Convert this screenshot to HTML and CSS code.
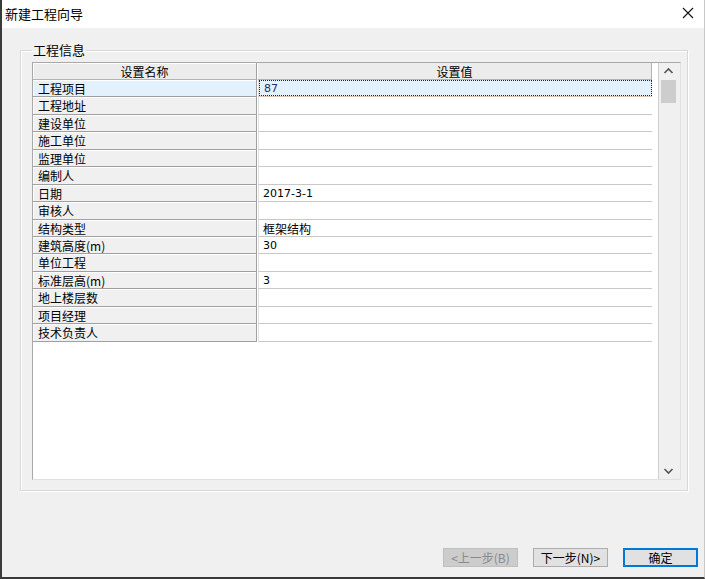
FILE: index.html
```html
<!DOCTYPE html>
<html lang="zh-CN">

<head>
    <meta charset="UTF-8">
    <meta name="viewport" content="width=device-width, initial-scale=1.0">
    <link rel="stylesheet" href="styles.css">
</head>

<body>
    <div class="window">
        <div class="titlebar">
            <span class="title">新建工程向导</span>
            <svg class="close" width="12" height="12" viewBox="0 0 12 12">
                <path d="M1 1 L11 11 M11 1 L1 11" stroke="#111" stroke-width="1.1" fill="none" />
            </svg>
        </div>

        <div class="body">
            <fieldset class="group">
                <legend>工程信息</legend>
                <div class="grid">
                    <div class="sheet">
                        <div class="row head">
                            <div class="name">设置名称</div>
                            <div class="value">设置值</div>
                        </div>
                        <div class="row selected">
                            <div class="name">工程项目</div>
                            <div class="value"><span class="focus">87</span></div>
                        </div>
                        <div class="row"><div class="name">工程地址</div><div class="value"></div></div>
                        <div class="row"><div class="name">建设单位</div><div class="value"></div></div>
                        <div class="row"><div class="name">施工单位</div><div class="value"></div></div>
                        <div class="row"><div class="name">监理单位</div><div class="value"></div></div>
                        <div class="row"><div class="name">编制人</div><div class="value"></div></div>
                        <div class="row"><div class="name">日期</div><div class="value num">2017-3-1</div></div>
                        <div class="row"><div class="name">审核人</div><div class="value"></div></div>
                        <div class="row"><div class="name">结构类型</div><div class="value">框架结构</div></div>
                        <div class="row"><div class="name">建筑高度(m)</div><div class="value num">30</div></div>
                        <div class="row"><div class="name">单位工程</div><div class="value"></div></div>
                        <div class="row"><div class="name">标准层高(m)</div><div class="value num">3</div></div>
                        <div class="row"><div class="name">地上楼层数</div><div class="value"></div></div>
                        <div class="row"><div class="name">项目经理</div><div class="value"></div></div>
                        <div class="row"><div class="name">技术负责人</div><div class="value"></div></div>
                    </div>
                    <div class="scrollbar">
                        <svg class="arrow" width="17" height="17" viewBox="0 0 17 17">
                            <path d="M4.5 10 L8.5 6 L12.5 10" stroke="#555" stroke-width="1.6" fill="none" />
                        </svg>
                        <div class="thumb"></div>
                        <div class="track"></div>
                        <svg class="arrow" width="17" height="17" viewBox="0 0 17 17">
                            <path d="M4.5 7 L8.5 11 L12.5 7" stroke="#555" stroke-width="1.6" fill="none" />
                        </svg>
                    </div>
                </div>
            </fieldset>

            <div class="buttons">
                <button class="btn disabled">&lt;上一步(B)</button>
                <button class="btn">下一步(N)&gt;</button>
                <button class="btn default">确定</button>
            </div>
        </div>
    </div>
</body>

</html>
```

FILE: styles.css
```css
body {
    margin: 0;
    font-family: "Noto Sans CJK SC", "Liberation Sans", sans-serif;
    font-size: 12px;
    color: #000;
}

.window {
    box-sizing: border-box;
    width: 705px;
    height: 579px;
    border-left: 2px solid #3a3a3a;
    border-bottom: 2px solid #3a3a3a;
    border-right: 1px solid #c8c8c8;
    background-color: #f0f0f0;
}

.titlebar {
    display: flex;
    align-items: center;
    justify-content: space-between;
    height: 28px;
    padding: 0 10px 0 3px;
    background-color: #fff;
}

.title {
    font-size: 13px;
    line-height: 28px;
}

.close {
    margin-top: -2px;
}

.body {
    padding-top: 15px;
}

.group {
    box-sizing: border-box;
    width: 668px;
    margin: 0 0 0 18px;
    padding: 5px 6px 10px 11px;
    border: 1px solid #d8d8d8;
    box-shadow: inset 1px 1px 0 #fff, 1px 1px 0 #fff;
}

.group legend {
    padding: 0 1px;
    font-size: 13px;
    line-height: 14px;
}

.grid {
    display: flex;
    height: 418px;
    box-sizing: border-box;
    border: 1px solid #a8a8a8;
    border-right-color: #e0e0e0;
    border-bottom-color: #e0e0e0;
}

.sheet {
    width: 625px;
    background-color: #fff;
    border-right: 1px solid #cfcfcf;
}

.row {
    display: flex;
    height: 17.45px;
    line-height: 17px;
}

.name {
    box-sizing: border-box;
    width: 224px;
    padding-left: 5px;
    background-color: #f0f0f0;
    border-right: 1px solid #a0a0a0;
    border-bottom: 1px solid #a0a0a0;
    box-shadow: inset 1px 1px 0 #fff;
    white-space: nowrap;
}

.value {
    box-sizing: border-box;
    width: 394px;
    margin-left: 1px;
    padding-left: 4px;
    border-left: 1px solid #e2e2e2;
    border-bottom: 1px solid #c8c8c8;
}

.num {
    font-family: "DejaVu Sans", "Liberation Sans", sans-serif;
    font-size: 11px;
}

.head {
    height: 17px;
}

.head .name,
.head .value {
    padding: 0;
    text-align: center;
    background-color: #ececec;
    border-bottom: 1px solid #b4b4b4;
}

.head .value {
    margin-left: 0;
    border-left: 1px solid #fff;
    border-right: 1px solid #b4b4b4;
    width: 395px;
}

.selected .name {
    background-color: #e2f1fb;
}

.selected .value {
    padding: 0;
    background-color: #e2f1fb;
    border-bottom-color: #e0c8b8;
}

.focus {
    display: block;
    height: 100%;
    box-sizing: border-box;
    padding-left: 4px;
    border: 1px dotted #222;
    line-height: 15px;
    font-family: "DejaVu Sans", "Liberation Sans", sans-serif;
    font-size: 11px;
    color: #1c2f6e;
}

.scrollbar {
    display: flex;
    flex-direction: column;
    width: 21px;
    padding-left: 1px;
    box-sizing: border-box;
}

.arrow {
    flex: none;
    display: block;
}

.thumb {
    width: 15px;
    height: 23px;
    margin-left: 1px;
    background-color: #cdcdcd;
}

.track {
    flex: 1;
}

.buttons {
    display: flex;
    justify-content: flex-end;
    gap: 15px;
    margin-top: 57px;
    padding-right: 6px;
}

.btn {
    box-sizing: border-box;
    width: 75px;
    height: 19px;
    padding: 0;
    font-family: "Noto Sans CJK SC", "Liberation Sans", sans-serif;
    font-size: 12px;
    line-height: 15px;
    color: #000;
    background-color: #e1e1e1;
    border: 1px solid #adadad;
}

.disabled {
    color: #8a8a8a;
    background-color: #cccccc;
    border-color: #bfbfbf;
}

.default {
    border: 2px solid #0078d7;
}
```
